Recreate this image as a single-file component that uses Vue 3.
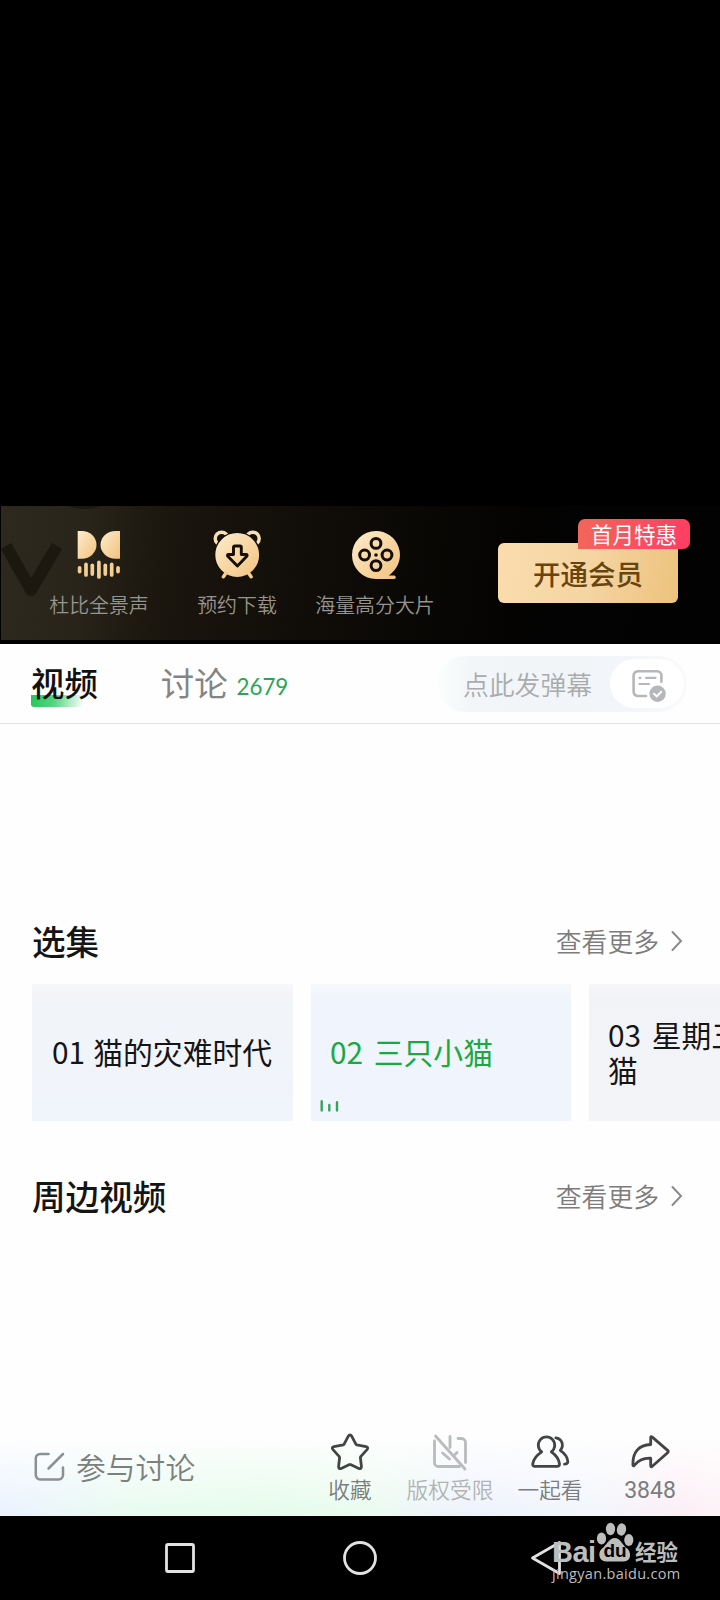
<template>
  <div class="page">
    <div class="player"></div>

    <section class="promo">
      <svg class="promo-bg" width="160" height="134" viewBox="0 0 160 134">
        <path d="M5 40L30 84L56 40" fill="none" stroke="#1b180f" stroke-width="12" stroke-linejoin="round" />
        <ellipse cx="84" cy="-1" rx="16" ry="4" fill="#1b180f" />
      </svg>
      <div class="benefits">
        <div class="benefit">
          <svg width="44" height="49" viewBox="0 0 44 49">
            <g fill="url(#gold)">
              <path d="M.7 1H5a14.5 13.85 0 0 1 0 27.7H.7z" />
              <path d="M43 1h-4.5a15 13.85 0 0 0 0 27.7H43z" />
            </g>
            <path
              v-for="bar in soundBars"
              :key="bar.x"
              :d="`M${bar.x} ${39.7 - bar.h}V${39.7 + bar.h}`"
              stroke="#f3cf95"
              stroke-width="3.7"
              stroke-linecap="round"
            />
          </svg>
          <span>杜比全景声</span>
        </div>
        <div class="benefit">
          <svg width="48" height="49" viewBox="0 0 48 49">
            <g fill="none" stroke="#f9dfb4" stroke-width="3.4">
              <circle cx="8.6" cy="8.6" r="6.4" />
              <circle cx="39.8" cy="8.6" r="6.4" />
            </g>
            <circle cx="24.2" cy="25" r="22.6" fill="url(#gold)" stroke="#15100a" stroke-width="1.4" />
            <path d="M13 43l-2.6 3.8M35.5 43l2.6 3.8" stroke="#f5cd90" stroke-width="3.4" stroke-linecap="round" />
            <path
              d="M20.5 17.3a1.3 1.3 0 0 1 1.3-1.3h5.2a1.3 1.3 0 0 1 1.3 1.3v7.2h4.8c1 0 1.4 1 .7 1.7L24.4 36 14.8 26.2c-.7-.7-.3-1.7.7-1.7h5z"
              fill="none"
              stroke="#150e06"
              stroke-width="2.9"
              stroke-linejoin="round"
            />
          </svg>
          <span>预约下载</span>
        </div>
        <div class="benefit">
          <svg width="49" height="49" viewBox="0 0 49 49">
            <path d="M25 1a24 24 0 0 1 15.8 42c-1 1-1.8 1.8-3 2.4h5.2a1.8 1.8 0 0 1 0 3.6H25A24 24 0 0 1 25 1z" fill="url(#gold)" />
            <g fill="none" stroke="#150e06" stroke-width="3">
              <circle cx="25" cy="13.4" r="4.9" />
              <circle cx="13.6" cy="25" r="4.9" />
              <circle cx="36" cy="25" r="4.9" />
              <circle cx="25" cy="35.6" r="4.9" />
            </g>
            <circle cx="25" cy="25" r="1.8" fill="#150e06" />
          </svg>
          <span>海量高分大片</span>
        </div>
      </div>
      <button class="btn-vip">
        开通会员
        <span class="vip-badge">首月特惠</span>
      </button>
      <svg class="defs" width="0" height="0">
        <defs>
          <linearGradient id="gold" x1="0" y1="0" x2="1" y2="1">
            <stop offset="0" stop-color="#fdecce" />
            <stop offset="1" stop-color="#f2c27c" />
          </linearGradient>
        </defs>
      </svg>
    </section>

    <nav class="tabs">
      <div class="tab active">视频</div>
      <div class="tab">讨论</div>
      <span class="tab-count">2679</span>
      <div class="danmaku">
        <span class="danmaku-hint">点此发弹幕</span>
        <div class="danmaku-switch">
          <svg width="35" height="34" viewBox="0 0 35 34" fill="none" stroke="#b5b7ba" stroke-width="2.6" stroke-linecap="round">
            <path d="M14 27H6a4.4 4.4 0 0 1-4.4-4.4V6.6A4.4 4.4 0 0 1 6 2.2h19a4.4 4.4 0 0 1 4.4 4.4v6.2" />
            <path d="M7.5 8.8h1M14 8.8h9.5M7.5 15h9.5" stroke-width="2.2" />
            <circle cx="25.6" cy="24.8" r="8.2" fill="#b5b7ba" stroke="none" />
            <path d="M22 24.8l2.8 2.6 4.4-4.6" stroke="#fff" stroke-width="2" />
          </svg>
        </div>
      </div>
    </nav>

    <main class="content">
      <div class="section-head">
        <h2>选集</h2>
        <a class="more">
          查看更多
          <svg width="12" height="22" viewBox="0 0 12 22"><path d="M1.5 2l8.5 9-8.5 9" /></svg>
        </a>
      </div>
      <div class="episodes">
        <div
          v-for="ep in episodes"
          :key="ep.no"
          class="episode"
          :class="{ playing: ep.playing }"
        >
          <p>{{ ep.no }} {{ ep.name }}</p>
          <svg v-if="ep.playing" class="playing-icon" width="20" height="12" viewBox="0 0 20 12">
            <path d="M1.7 1.2v9.2M9.3 5v5.4M17 2.2v8.2" />
          </svg>
        </div>
      </div>
      <div class="section-head around">
        <h2>周边视频</h2>
        <a class="more">
          查看更多
          <svg width="12" height="22" viewBox="0 0 12 22"><path d="M1.5 2l8.5 9-8.5 9" /></svg>
        </a>
      </div>
    </main>

    <footer class="toolbar">
      <div class="join">
        <svg width="31" height="30" viewBox="0 0 31 30" fill="none" stroke="#8b9092" stroke-width="2.5" stroke-linecap="round">
          <path d="M14.5 1.9H6.2a4.4 4.4 0 0 0-4.4 4.4v16.8a4.4 4.4 0 0 0 4.4 4.4h18.4a4.4 4.4 0 0 0 4.4-4.4v-7.5" />
          <path d="M14.5 16.5L29 2" />
        </svg>
        <span>参与讨论</span>
      </div>
      <div class="actions">
        <div class="action">
          <svg width="40" height="38" viewBox="0 0 40 38" fill="none" stroke="#434545" stroke-width="2.8" stroke-linejoin="round">
            <path d="M18.2 3.3q1.8-2.6 3.6 0l4.2 8 .8.6 9.2 1.7q2.8.7 1 3l-6.3 7-.3 1 1 8.8q.1 3-2.6 2L20.5 31.6h-1l-8.3 3.8q-2.7 1-2.6-2l1-8.8-.3-1-6.3-7q-1.800-2.300 1-3l9.200-1.700.8-.6z" />
          </svg>
          <span>收藏</span>
        </div>
        <div class="action limited">
          <svg width="40" height="38" viewBox="0 0 40 38" fill="none" stroke="#b9bcbc" stroke-width="2.8" stroke-linecap="round">
            <path d="M4.5 8v21.500a4 4 0 0 0 4 4h21" />
            <path d="M28 5.5h3.500a4 4 0 0 1 4 4V29.500" />
            <path d="M5.5 3L35 36M20 3.500v11M12.500 20l7 6M27 19.500l-2 2" />
          </svg>
          <span>版权受限</span>
        </div>
        <div class="action">
          <svg width="40" height="38" viewBox="0 0 40 38" fill="none" stroke="#434545" stroke-width="2.8" stroke-linecap="round" stroke-linejoin="round">
            <path d="M11.7 18.800A8.200 8.200 0 1 1 21.300 18.800C26 22 29 26 29.500 31q0 2.300-2.300 2.300H5q-2.500 0-2.300-2.300C3.300 26 7 22 11.700 18.800z" />
            <path d="M25.8 4.800C32 5.500 34.500 12.500 30.300 17.300c4.700 3.300 7.500 7 7.500 11.500q-.2 2-3.300 2.300" />
          </svg>
          <span>一起看</span>
        </div>
        <div class="action">
          <svg width="40" height="38" viewBox="0 0 40 38" fill="none" stroke="#434545" stroke-width="2.8" stroke-linejoin="round">
            <path d="M20.7 4.800q0-2 1.600-.7l15.300 13.300q1.300 1.200 0 2.300L22.300 33.300q-1.600 1.200-1.600-.8V25.200C13 24.800 8.500 27 4.200 32.500q-1.500 1-1.300-1C2.700 19.500 8.500 12 20.700 11.500z" />
          </svg>
          <span class="num">3848</span>
        </div>
      </div>
    </footer>

    <div class="system-nav">
      <svg width="32" height="36" viewBox="0 0 32 36"><rect x="2.5" y="4.5" width="27" height="27" rx="1.5" /></svg>
      <svg width="36" height="36" viewBox="0 0 36 36"><circle cx="18" cy="18" r="15.5" /></svg>
      <svg width="32" height="38" viewBox="0 0 32 38"><path d="M29.5 3.5v31L2.5 19z" /></svg>

      <div class="watermark">
        <div class="wm-logo">
          <span class="wm-bai">Bai</span>
          <span class="wm-paw">
            <svg width="38" height="40" viewBox="0 0 38 40" fill="#bdbdbd">
              <ellipse cx="5.5" cy="16.5" rx="4.600" ry="6" />
              <ellipse cx="14.5" cy="7" rx="4.600" ry="6.200" />
              <ellipse cx="25.5" cy="7.5" rx="4.600" ry="6.200" transform="rotate(10 25.5 7.5)" />
              <ellipse cx="32.8" cy="18" rx="4.600" ry="6" />
              <path d="M18.8 16c6 0 7.500 7.500 13 11 3.500 3.500 3.500 12.500-4 12.500-4 0-14 .2-18 0C3 39 1.500 31 5.500 27c5.500-4 7.300-11 13.300-11z" />
            </svg>
            <em>du</em>
          </span>
          <span class="wm-cn">经验</span>
        </div>
        <div class="wm-url">jingyan.baidu.com</div>
      </div>
    </div>
  </div>
</template>

<script setup>
const soundBars = [
  { x: 2.6, h: 1.9 },
  { x: 9, h: 5.3 },
  { x: 15.3, h: 4.4 },
  { x: 21.9, h: 7.3 },
  { x: 28.3, h: 4.4 },
  { x: 34.7, h: 5.3 },
  { x: 41, h: 1.9 }
]

const episodes = [
  { no: '01', name: '猫的灾难时代' },
  { no: '02', name: '三只小猫', playing: true },
  { no: '03', name: '星期五的猫' }
]
</script>

<style>
body {
  background: #000;
  overflow: hidden;
}
</style>

<style scoped>
.page {
  width: 720px;
  height: 1600px;
  display: flex;
  flex-direction: column;
  background: #fefefe;
  font-family: 'Noto Sans CJK SC', sans-serif;
  overflow: hidden;
}

svg {
  display: block;
  flex-shrink: 0;
}

.player {
  height: 506px;
  background: #000;
}

/* 会员推广 */
.promo {
  position: relative;
  box-sizing: border-box;
  height: 138px;
  display: flex;
  align-items: flex-start;
  justify-content: space-between;
  padding-right: 42px;
  border-left: 1px solid #000;
  border-bottom: 4px solid #000;
  background: linear-gradient(97deg, #2e291f 0, #292419 90px, #1b160e 165px, #14100a 260px, #0b0906 400px, #040302 520px, #020202 100%);
}

.promo-bg {
  position: absolute;
  left: 0;
  top: 0;
}

.defs {
  position: absolute;
}

.benefits {
  position: relative;
  display: flex;
  padding: 24px 0 0 29px;
}

.benefit {
  width: 138px;
  display: flex;
  flex-direction: column;
  align-items: center;
  gap: 11px;
  font-size: 19.9px;
  line-height: 30px;
  font-weight: 350;
  color: #97948f;
  white-space: nowrap;
}

.btn-vip {
  position: relative;
  width: 180px;
  height: 60px;
  margin-top: 37px;
  padding: 0;
  border: none;
  border-radius: 6px;
  background: linear-gradient(100deg, #fadcae, #f5d5a2 50%, #edc27d);
  font-family: inherit;
  font-size: 27.5px;
  line-height: 60px;
  font-weight: 500;
  color: #68450f;
}

.vip-badge {
  position: absolute;
  right: -12px;
  top: -24px;
  width: 112px;
  height: 30px;
  border-radius: 7px 7px 7px 0;
  background: linear-gradient(90deg, #f2665a, #ff3d63);
  font-size: 21.6px;
  line-height: 30px;
  font-weight: 400;
  color: #fff;
}

/* 标签栏 */
.tabs {
  box-sizing: border-box;
  height: 80px;
  display: flex;
  align-items: center;
  padding: 0 33px 0 31px;
  border-bottom: 1px solid #e2e2e2;
}

.tab {
  margin-right: 63px;
  padding-bottom: 4px;
  font-size: 33.4px;
  line-height: 42px;
  color: #848484;
}

.tab.active {
  color: #111;
  font-weight: 500;
  background: linear-gradient(100deg, #25c759 0, #54d57d 40%, rgba(120, 225, 155, 0) 90%) 0 100% / 58px 12px no-repeat;
  border-radius: 0 0 0 3px;
}

.tab + .tab {
  margin-right: 9px;
}

.tab-count {
  padding-top: 7px;
  font-family: Lato, sans-serif;
  font-size: 22.3px;
  line-height: 28px;
  color: #2ba656;
}

.danmaku {
  box-sizing: border-box;
  width: 250px;
  height: 56px;
  margin-left: auto;
  display: flex;
  align-items: center;
  justify-content: space-between;
  padding: 0 3px 0 26px;
  border-radius: 28px;
  background: linear-gradient(90deg, #fafefd 0, #f2f6f8 34px, #f2f5f9 75%, #f9fafa 100%);
}

.danmaku-hint {
  font-size: 25.8px;
  line-height: 36px;
  font-weight: 350;
  color: #a8acae;
}

.danmaku-switch {
  box-sizing: border-box;
  width: 74px;
  height: 49px;
  padding: 10px 0 0 22px;
  border-radius: 25px;
  background: #fff;
}

/* 选集 */
.content {
  height: 712px;
  padding-top: 191px;
  box-sizing: border-box;
}

.section-head {
  display: flex;
  align-items: center;
  justify-content: space-between;
  height: 52px;
  padding: 0 37px 0 32px;
}

.section-head h2 {
  margin: 0;
  font-size: 33.6px;
  line-height: 52px;
  font-weight: 500;
  color: #151515;
}

.more {
  display: flex;
  align-items: center;
  gap: 12px;
  font-size: 25.8px;
  line-height: 36px;
  font-weight: 350;
  color: #7c7c7c;
}

.more svg {
  fill: none;
  stroke: #8a8a8a;
  stroke-width: 2;
  stroke-linecap: round;
}

.episodes {
  display: flex;
  gap: 18px;
  margin-top: 17px;
  padding-left: 32px;
  overflow: hidden;
}

.episode {
  position: relative;
  flex: none;
  box-sizing: border-box;
  width: 261px;
  height: 137px;
  display: flex;
  align-items: center;
  padding: 0 10px 2px 20px;
  background: linear-gradient(180deg, #f8f8f9 0, #f2f4f8 8%, #f1f4f9 50%, #f0f4fc 100%);
  font-size: 29.8px;
  line-height: 35px;
  word-spacing: 1.5px;
  color: #151515;
}

.episode p {
  margin: 0;
}

.episode:last-child {
  width: 220px;
  padding-left: 19px;
  padding-right: 30px;
  word-spacing: 4px;
  background: linear-gradient(180deg, #f7f7f9 0, #f2f3f7 8%, #f2f4f7 100%);
}

.episode.playing {
  width: 260px;
  padding-left: 19px;
  background: linear-gradient(180deg, #f7f8fa 0, #f0f4fc 10%);
  word-spacing: 4px;
  color: #1aa83f;
}

.playing-icon {
  position: absolute;
  left: 9px;
  bottom: 9px;
  fill: none;
  stroke: #35a25d;
  stroke-width: 2.4;
  stroke-linecap: round;
}

.around {
  margin-top: 49px;
}

/* 底部操作栏 */
.toolbar {
  height: 80px;
  display: flex;
  justify-content: space-between;
  padding: 0 20px 0 34px;
  background:
    linear-gradient(180deg, #fefefe 0, rgba(254, 254, 254, 0) 100%),
    linear-gradient(90deg, #eaf2ff 0, #e8fbf1 17%, #e4fcea 38%, #eafbf0 52%, #eef2fd 65%, #f2f6fc 82%, #fceef5 95%, #fdf2f7 100%);
}

.join {
  display: flex;
  align-items: center;
  gap: 11px;
  height: 62px;
  font-size: 29.8px;
  line-height: 40px;
  font-weight: 350;
  color: #7c807e;
}

.join span {
  margin-top: -2px;
}

.actions {
  display: flex;
}

.action {
  width: 100px;
  display: flex;
  flex-direction: column;
  align-items: center;
  gap: 1px;
  margin-top: -3px;
  font-size: 21.7px;
  line-height: 33px;
  font-weight: 350;
  color: #7a7d7d;
  white-space: nowrap;
}

.action.limited {
  color: #b0b4b3;
}

.action .num {
  font-family: Roboto, sans-serif;
  font-size: 23px;
  font-weight: 400;
  line-height: 37px;
}

/* 系统导航 */
.system-nav {
  position: relative;
  height: 84px;
  display: flex;
  align-items: center;
  gap: 146px;
  box-sizing: border-box;
  padding-left: 164px;
  background: #000;
}

.system-nav > svg {
  fill: none;
  stroke: #e2e2e2;
  stroke-width: 2.8;
  stroke-linejoin: round;
}

.system-nav > svg:nth-of-type(3) {
  margin-left: 6px;
}

.watermark {
  position: absolute;
  left: 552px;
  top: 6px;
  color: #bdbdbd;
}

.wm-logo {
  display: flex;
  align-items: flex-end;
  height: 40px;
}

.wm-bai {
  width: 44px;
  font-family: 'Liberation Sans', sans-serif;
  font-size: 29px;
  line-height: 20px;
  font-weight: 700;
  letter-spacing: -0.5px;
}

.wm-paw {
  position: relative;
}

.wm-paw em {
  position: absolute;
  left: 0;
  right: 0;
  bottom: 1px;
  text-align: center;
  font-family: 'Liberation Sans', sans-serif;
  font-style: normal;
  font-size: 19px;
  line-height: 20px;
  font-weight: 700;
  color: #000;
}

.wm-cn {
  padding-left: 1px;
  font-size: 21.5px;
  line-height: 22px;
  font-weight: 700;
}

.wm-url {
  font-family: 'Open Sans', sans-serif;
  font-size: 14.5px;
  line-height: 24px;
  letter-spacing: 0.3px;
}
</style>
